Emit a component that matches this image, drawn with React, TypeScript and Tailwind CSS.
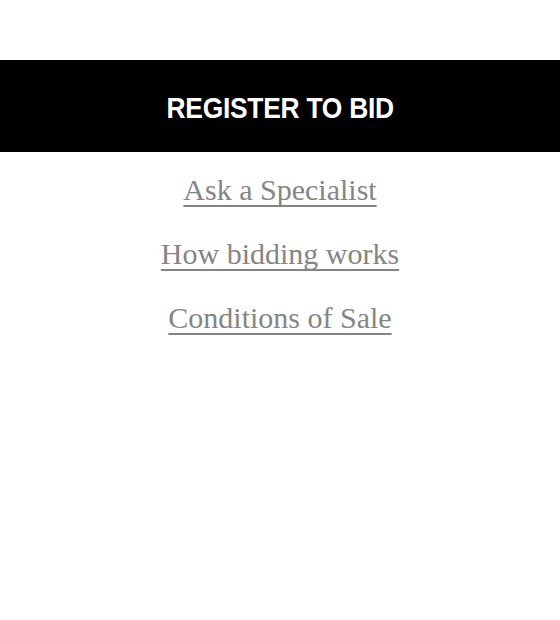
import React from "react";

export default function App() {
  const links = ["Ask a Specialist", "How bidding works", "Conditions of Sale"];
  return (
    <div className="min-h-screen w-full bg-white pt-[60px]">
      <div className="flex h-[92px] w-full items-center justify-center bg-black pt-[4px]">
        <span
          className="inline-block scale-x-[0.88] text-[30px] font-bold uppercase leading-none tracking-[-0.3px] text-white"
          style={{ fontFamily: '"Liberation Sans", Arial, sans-serif' }}
        >
          Register to Bid
        </span>
      </div>
      <div className="flex flex-col items-center pt-[18px]">
        {links.map((l) => (
          <a
            key={l}
            href="#"
            className="h-[64px] text-[30px] leading-[40px] text-[#858585] underline decoration-[2px] underline-offset-[5px] [text-decoration-skip-ink:none]"
            style={{ fontFamily: '"Liberation Serif", "Times New Roman", serif' }}
          >
            {l}
          </a>
        ))}
      </div>
    </div>
  );
}
